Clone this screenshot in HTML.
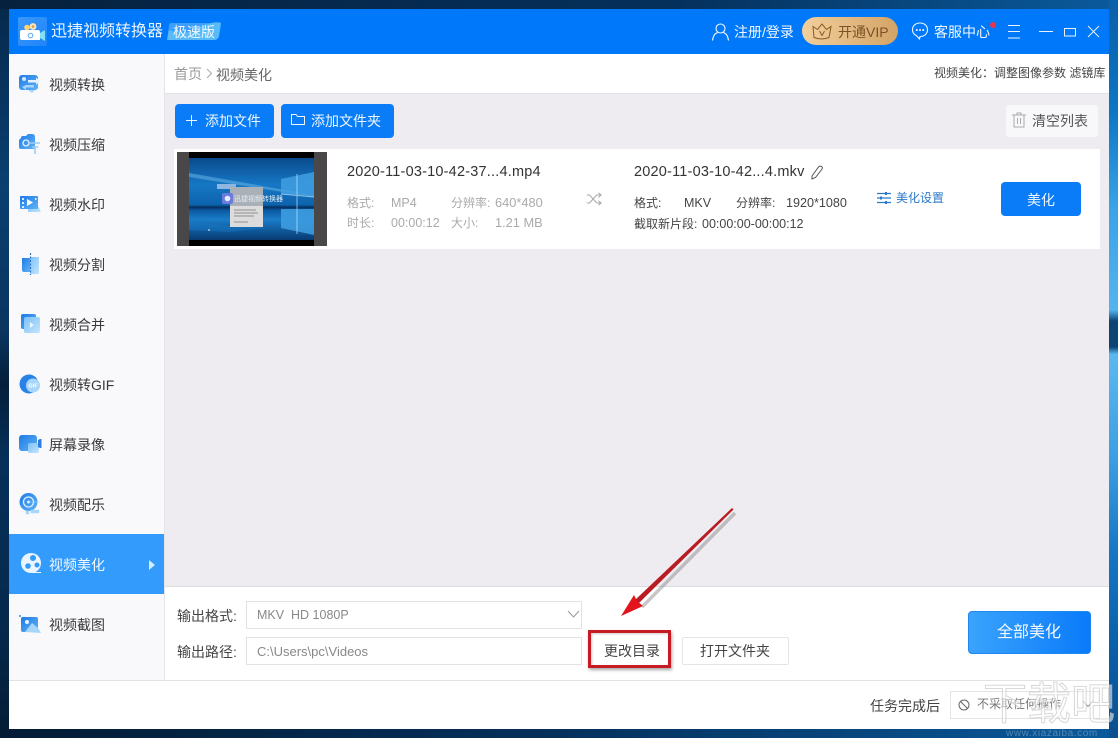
<!DOCTYPE html>
<html style="background:#04294f"><head><meta charset="utf-8">
<style>
*{box-sizing:border-box;margin:0;padding:0}
html,body{width:1118px;height:738px;overflow:hidden}
body{position:relative;font-family:"Liberation Sans","Noto Sans CJK SC",sans-serif;font-size:13px;color:#444;background:#04294f;filter:blur(.3px)}
.a{position:absolute;white-space:nowrap}
.t{position:absolute;white-space:nowrap;line-height:18px}
.nav{position:absolute;left:49px;font-size:14px;color:#3a3a3a;line-height:20px;white-space:nowrap}
.ic{position:absolute}
</style></head><body>
<svg style="position:absolute;width:0;height:0"><defs>
<linearGradient id="b" x1="0" y1="0" x2="1" y2="1"><stop offset="0" stop-color="#1f7be6"/><stop offset="1" stop-color="#5fb2f4"/></linearGradient>
<linearGradient id="l" x1="0" y1="0" x2="1" y2="1"><stop offset="0" stop-color="#7cc2f8"/><stop offset="1" stop-color="#c4e4fc"/></linearGradient>
<linearGradient id="g" x1="0" y1="0" x2="0" y2="1"><stop offset="0" stop-color="#0a4a8c"/><stop offset=".32" stop-color="#1677c4"/><stop offset=".57" stop-color="#0d63ad"/><stop offset=".6" stop-color="#063060"/><stop offset=".64" stop-color="#0b5ba4"/><stop offset=".75" stop-color="#1a7cc8"/><stop offset="1" stop-color="#063a72"/></linearGradient>
</defs></svg>
<!-- desktop -->
<div class="a" style="left:0;top:0;width:9px;height:738px;background:linear-gradient(180deg,#06294c 0,#0a3f70 25%,#0a3560 45%,#041f3a 52%,#06305a 62%,#06294c 85%,#041c34 100%)"></div>
<div class="a" style="left:0;top:0;width:1118px;height:9px;background:linear-gradient(90deg,#06213e,#05305c 60%,#0a5a9c 100%)"></div>
<div class="a" style="left:0;top:729px;width:1118px;height:9px;background:linear-gradient(90deg,#041c34,#05305c 50%,#0a5a9c 100%)"></div>
<div class="a" style="left:1109px;top:0;width:9px;height:738px;background:linear-gradient(180deg,#0a5fa8 0,#0c76c4 15%,#3aa2e6 28%,#55b4ee 42%,#0a4476 43.5%,#0a4476 47%,#5bb8f0 48%,#3d9fe2 62%,#1576c4 75%,#0a5fa8 88%,#0a4f8e 100%)"></div>

<!-- window -->
<div class="a" style="left:9px;top:9px;width:1100px;height:720px;background:#fff"></div>
<!-- title bar -->
<div class="a" style="left:9px;top:9px;width:1100px;height:45px;background:#0078fa"></div>
<div class="a" style="left:18px;top:17px;width:29px;height:29px;background:linear-gradient(135deg,#3a98fb,#1f84fa);border-radius:2px"></div>
<svg class="ic" style="left:18px;top:17px" width="29" height="29" viewBox="0 0 29 29">
<path d="M2 15q0-2 2-2h16q2 0 2 2v8H4q-2 0-2-2z" fill="#fff"/><circle cx="9" cy="10.500" r="2.800" fill="#ffd27a"/><circle cx="15" cy="9.500" r="3.400" fill="#ffe4b0"/><circle cx="15" cy="9.500" r="1.300" fill="#c99a55"/><path d="M22 16l5-3v11l-5-3z" fill="#7fe3f5"/><circle cx="12.500" cy="18.500" r="2.300" fill="none" stroke="#5aa6e8" stroke-width="1"/>
</svg>
<div class="t" style="left:51px;top:21px;font-size:16px;line-height:22px;color:#e9f3ff">迅捷视频转换器</div>
<svg class="ic" style="left:167px;top:22px" width="54" height="19" viewBox="0 0 54 19"><path d="M4 1h50l-2 13q-1 4-5 4H0L2 4q0-3 2-3z" fill="#3d9ffc"/><path d="M0 18L2 8q14 6 30-2t22-5l-2 13q-1 4-5 4z" fill="#62c4f5" opacity=".75"/></svg>
<div class="t" style="left:173px;top:23px;font-size:14px;color:#f1f8ff">极速版</div>

<svg class="ic" style="left:711px;top:22px" width="19" height="19" viewBox="0 0 19 19" fill="none" stroke="#f0f7ff" stroke-width="1.100"><circle cx="9.500" cy="6.500" r="4.500"/><path d="M1.500 18.500q1-7 5-7.800M17.500 18.500q-1-7-5-7.800"/></svg>
<div class="t" style="left:734px;top:23px;font-size:14px;color:#f0f7ff">注册/登录</div>
<div class="a" style="left:802px;top:17px;width:96px;height:28px;border-radius:14px;background:linear-gradient(90deg,#f2cf9d,#d3a366)"></div>
<svg class="ic" style="left:812px;top:23px" width="20" height="17" viewBox="0 0 20 17" fill="none" stroke="#8a5a22" stroke-width="1"><path d="M1 3.500l4.500 3L10 1l4.500 5.500 4.500-3-2 11q-7.500 3-15 0z"/><path d="M7.500 8l2.500 4.500L12.500 8"/></svg>
<div class="t" style="left:838px;top:23px;font-size:14px;color:#7a5226">开通VIP</div>
<svg class="ic" style="left:911px;top:22px" width="18" height="18" viewBox="0 0 18 18" fill="none" stroke="#eaf4ff" stroke-width="1.100"><path d="M9 1c4.500 0 7.500 2.900 7.500 6.800S13.500 14.500 9 14.500l-.5 2.500-3-3.300C3 12.600 1.500 10.500 1.500 7.800 1.500 3.900 4.500 1 9 1z"/><circle cx="5.800" cy="8" r=".5" fill="#fff"/><circle cx="9" cy="8" r=".5" fill="#fff"/><circle cx="12.200" cy="8" r=".5" fill="#fff"/></svg>
<div class="t" style="left:934px;top:23px;font-size:14px;color:#f0f7ff">客服中心</div>
<div class="a" style="left:990px;top:22px;width:6px;height:6px;border-radius:50%;background:#e8354a"></div>
<svg class="ic" style="left:1007px;top:24px" width="100" height="16" viewBox="0 0 100 16" fill="none" stroke="#e8f3ff" stroke-width="1"><path d="M1 1.500h12M1 7.500h12M1 14h12"/><path d="M32 7.500h14"/><rect x="57.500" y="4.500" width="11" height="7.500"/><path d="M81 2l11 11M92 2L81 13"/></svg>

<!-- sidebar -->
<div class="a" style="left:9px;top:54px;width:155px;height:626px;background:#f9f8fb"></div>
<div class="a" style="left:164px;top:54px;width:1px;height:626px;background:#e4e3e7"></div>
<div class="a" style="left:9px;top:534px;width:155px;height:60px;background:#339bfb"></div>
<svg class="ic" style="left:18px;top:73px" width="24" height="22" viewBox="0 0 24 22"><rect x="1" y="2" width="19" height="15" rx="3" fill="url(#b)"/><circle cx="6" cy="6" r="2" fill="#cfe6fb"/><path d="M22 8l-4-3.500V7H10v2.500h8V12z" fill="#e6f3ff"/><path d="M8 12h8v2.500H8V17l-4-3z" fill="#a8d6fa"/><path d="M10 17h7l-3 3z" fill="#8cc8f7" opacity=".7"/></svg>
<svg class="ic" style="left:18px;top:133px" width="24" height="22" viewBox="0 0 24 22"><path d="M3 5q0-2 2-2h3l2-2h4q3 0 3 3v12H3q-2 0-2-2V7z" fill="url(#b)"/><circle cx="8" cy="10" r="3" fill="none" stroke="#e4f2ff" stroke-width="1.300"/><path d="M12 10h10M14 14h6M17 15v6" stroke="#9bcef7" stroke-width="1.600"/></svg>
<svg class="ic" style="left:19px;top:194px" width="22" height="20" viewBox="0 0 22 20"><path d="M9 12h10l3 6H9z" fill="url(#l)"/><rect x="1" y="2" width="18" height="13" rx="1" fill="url(#b)"/><path d="M8 5l6 3.500-6 3.500z" fill="#fff"/><path d="M3 4h2v2H3zM3 8h2v2H3zM3 12h2v2H3zM16 4h1.500v2H16z" fill="#d9ecfd"/></svg>
<svg class="ic" style="left:21px;top:252px" width="20" height="24" viewBox="0 0 20 24"><path d="M1 6h8v14H3q-2 0-2-2z" fill="url(#b)"/><path d="M9 5h9v16q0 1-1 1H9z" fill="url(#l)"/><path d="M9.500 1v22" stroke="#2f72c8" stroke-dasharray="2 1.500" stroke-width="1.200"/></svg>
<svg class="ic" style="left:20px;top:313px" width="21" height="21" viewBox="0 0 21 21"><rect x="1" y="1" width="15" height="15" rx="2" fill="url(#b)"/><rect x="4" y="4" width="16" height="16" rx="2" fill="url(#l)"/><path d="M10 9l4 3-4 3z" fill="#e9f5ff"/></svg>
<svg class="ic" style="left:19px;top:374px" width="22" height="20" viewBox="0 0 22 20"><circle cx="10" cy="10" r="9.500" fill="#2a82e6"/><circle cx="14" cy="11.500" r="7" fill="#a8d6fa"/><text x="14" y="13.500" font-size="5.500" font-weight="bold" fill="#fff" text-anchor="middle" font-family="Liberation Sans">GIF</text></svg>
<svg class="ic" style="left:18px;top:434px" width="25" height="20" viewBox="0 0 25 20"><rect x="1" y="1" width="18" height="16" rx="3" fill="url(#b)"/><rect x="10" y="9" width="11" height="10" rx="2" fill="url(#l)"/><path d="M20 6l2-1h1.500v9H22l-2-1z" fill="#2a7fe0"/></svg>
<svg class="ic" style="left:19px;top:492px" width="21" height="23" viewBox="0 0 21 23"><circle cx="9.500" cy="10" r="9" fill="url(#b)"/><circle cx="9.500" cy="10" r="5" fill="none" stroke="#dcefff" stroke-width="1.300"/><circle cx="9.500" cy="10" r="1.500" fill="#dcefff"/><path d="M10 10h11M12 18h8v3h-8zM7 19h3v3H7z" fill="#a8d6fa" stroke="#a8d6fa" stroke-width=".5"/></svg>
<svg class="ic" style="left:20px;top:551px" width="22" height="24" viewBox="0 0 22 24"><circle cx="11" cy="12" r="10" fill="#eaf5ff"/><circle cx="13" cy="7" r="3" fill="#339bfb"/><circle cx="8" cy="15" r="2.800" fill="#339bfb"/><circle cx="17" cy="14" r="2.500" fill="#339bfb"/><path d="M12 21.500h9" stroke="#eaf5ff" stroke-width="1"/></svg>
<svg class="ic" style="left:18px;top:614px" width="24" height="21" viewBox="0 0 24 21"><path d="M1 1h2v2H1z" fill="#5da9ef"/><rect x="3" y="3" width="17" height="15" rx="2" fill="url(#b)"/><circle cx="9" cy="8" r="2" fill="#e3f2ff"/><path d="M7 18l7-9 6 5 3 5z" fill="#a8d6fa"/></svg>
<div class="nav" style="top:75px">视频转换</div>
<div class="nav" style="top:135px">视频压缩</div>
<div class="nav" style="top:195px">视频水印</div>
<div class="nav" style="top:255px">视频分割</div>
<div class="nav" style="top:315px">视频合并</div>
<div class="nav" style="top:375px">视频转GIF</div>
<div class="nav" style="top:435px">屏幕录像</div>
<div class="nav" style="top:495px">视频配乐</div>
<div class="nav" style="top:555px;color:#f2f9ff">视频美化</div>
<div class="nav" style="top:615px">视频截图</div>
<svg class="ic" style="left:148px;top:560px" width="7" height="10" viewBox="0 0 7 10"><path d="M1 0l6 5-6 5z" fill="#d5ebff"/></svg>

<!-- header -->
<div class="a" style="left:165px;top:93px;width:944px;height:493px;background:#eeecf1"></div>
<div class="a" style="left:165px;top:93px;width:944px;height:1px;background:#e0dfe3"></div>
<div class="t" style="left:174px;top:65px;font-size:14px;color:#9a9a9a">首页</div>
<svg class="ic" style="left:206px;top:68px" width="7" height="11" viewBox="0 0 7 11" fill="none" stroke="#aaa"><path d="M1 1l4.500 4.500L1 10"/></svg>
<div class="t" style="left:216px;top:66px;font-size:14px;color:#666">视频美化</div>
<div class="t" style="left:934px;top:64px;font-size:12px;color:#444">视频美化：调整图像参数 滤镜库</div>

<!-- toolbar -->
<div class="a" style="left:175px;top:104px;width:99px;height:34px;background:#0a7cf8;border-radius:4px"></div>
<svg class="ic" style="left:186px;top:115px" width="11" height="11" viewBox="0 0 11 11" stroke="#f0f8ff"><path d="M5.500 0v11M0 5.500h11"/></svg>
<div class="t" style="left:205px;top:112px;font-size:14px;color:#eef7ff">添加文件</div>
<div class="a" style="left:281px;top:104px;width:113px;height:34px;background:#0a7cf8;border-radius:4px"></div>
<svg class="ic" style="left:291px;top:113px" width="14" height="13" viewBox="0 0 14 13" fill="none" stroke="#f0f8ff"><path d="M.5 1.500h4.500l1.500 2h7v8H.5z"/></svg>
<div class="t" style="left:311px;top:112px;font-size:14px;color:#eef7ff">添加文件夹</div>
<div class="a" style="left:1006px;top:105px;width:92px;height:32px;background:#f8f7fa;border-radius:3px"></div>
<svg class="ic" style="left:1012px;top:112px" width="15" height="16" viewBox="0 0 15 16" fill="none" stroke="#aaa"><path d="M0 3h14M5 3V1h4v2M2 3v12h10V3M5.500 6v6M8.500 6v6"/></svg>
<div class="t" style="left:1032px;top:112px;font-size:14px;color:#555">清空列表</div>

<!-- file row -->
<div class="a" style="left:174px;top:149px;width:926px;height:100px;background:#fff"></div>
<div class="a" style="left:177px;top:152px;width:150px;height:94px;background:#4a4748"></div>
<svg class="ic" style="left:189px;top:152px" width="125" height="94" viewBox="0 0 125 94">
<rect width="125" height="94" fill="#000"/><rect y="6" width="125" height="82" fill="url(#g)"/>
<path d="M0 21l125 22v2L0 25z" fill="#6bb8ea" opacity=".5"/>
<path d="M0 70l40 4 40 2-40 4L0 78z" fill="#1a7cc8" opacity=".4"/>
<path d="M92 27l33-7v24l-33-2zM92 57h33v26l-33-7z" fill="#3f9fe2" opacity=".85"/>
<path d="M108 22v60M92 42l33 3" stroke="#bfe4fa" stroke-width="1" opacity=".7"/>
<rect x="28" y="32" width="19" height="5" fill="#8fb6e0"/>
<rect x="41" y="35" width="33" height="40" fill="#dcdcdc"/><rect x="41" y="35" width="33" height="19" fill="#a9b0b8"/>
<path d="M45 58h22M45 61h24M45 64h20M45 70h14" stroke="#777" stroke-width=".7"/>
<rect x="33" y="41" width="11" height="11" rx="2" fill="#6a7be0"/><circle cx="38.500" cy="46.500" r="2.800" fill="#e9ecff"/>
<text x="45" y="49" font-size="7" fill="#e6eef6" font-family="Noto Sans CJK SC">迅捷视频转换器</text>
<circle cx="20" cy="78" r=".8" fill="#fff"/>
</svg>
<div class="t" style="left:347px;top:163px;font-size:14.500px;letter-spacing:.2px;color:#333">2020-11-03-10-42-37...4.mp4</div>
<div class="t" style="left:347px;top:194px;font-size:12px;color:#aaa">格式:</div>
<div class="t" style="left:391px;top:194px;font-size:12.500px;color:#aaa">MP4</div>
<div class="t" style="left:451px;top:194px;font-size:12px;color:#aaa">分辨率:</div>
<div class="t" style="left:495px;top:194px;font-size:12.800px;color:#aaa">640*480</div>
<div class="t" style="left:347px;top:214px;font-size:12px;color:#aaa">时长:</div>
<div class="t" style="left:391px;top:214px;font-size:12.500px;color:#aaa">00:00:12</div>
<div class="t" style="left:451px;top:214px;font-size:12px;color:#aaa">大小:</div>
<div class="t" style="left:495px;top:214px;font-size:12.800px;color:#aaa">1.21 MB</div>
<svg class="ic" style="left:586px;top:192px" width="16" height="14" viewBox="0 0 18 15" fill="none" stroke="#aaa" stroke-width="1.200"><path d="M1 3h3l8 9h4M1 12h3l8-9h4M14 .5L17 3l-3 2.500M14 9.500l3 2.500-3 2.500"/></svg>
<div class="t" style="left:634px;top:163px;font-size:14.500px;letter-spacing:.2px;color:#333">2020-11-03-10-42...4.mkv</div>
<svg class="ic" style="left:810px;top:165px" width="13" height="15" viewBox="0 0 13 15" fill="none" stroke="#555"><path d="M2 11L8.500 2q1.500-1.500 3-.5t.5 2.500L5.500 12.500 2 14z"/></svg>
<div class="t" style="left:634px;top:194px;font-size:12px;color:#444">格式:</div>
<div class="t" style="left:684px;top:194px;font-size:12.500px;color:#444">MKV</div>
<div class="t" style="left:736px;top:194px;font-size:12px;color:#444">分辨率:</div>
<div class="t" style="left:786px;top:194px;font-size:12.600px;color:#444">1920*1080</div>
<div class="t" style="left:634px;top:215px;font-size:12px;color:#444">截取新片段:</div>
<div class="t" style="left:702px;top:215px;font-size:12.500px;color:#444">00:00:00-00:00:12</div>
<svg class="ic" style="left:877px;top:191px" width="14" height="14" viewBox="0 0 14 14" fill="none" stroke="#2a78c8" stroke-width="1.200"><path d="M0 2.500h14M0 7h14M0 11.500h14"/><path d="M9 1v3M4 5.500v3M9 10v3" stroke-width="2"/></svg>
<div class="t" style="left:896px;top:189px;font-size:12px;color:#2a78c8">美化设置</div>
<div class="a" style="left:1001px;top:182px;width:80px;height:34px;background:#0a7cf8;border-radius:4px"></div>
<div class="t" style="left:1027px;top:191px;font-size:14px;color:#f0f8ff">美化</div>

<!-- bottom panel -->
<div class="a" style="left:165px;top:586px;width:944px;height:1px;background:#dddce0"></div>
<div class="a" style="left:9px;top:680px;width:1100px;height:1px;background:#e2e2e4"></div>
<div class="t" style="left:177px;top:607px;font-size:14px;color:#444">输出格式:</div>
<div class="a" style="left:246px;top:601px;width:336px;height:28px;border:1px solid #e2e2e4;background:#fff"></div>
<div class="t" style="left:257px;top:606px;font-size:12.500px;color:#888">MKV&nbsp; HD 1080P</div>
<svg class="ic" style="left:567px;top:610px" width="13" height="8" viewBox="0 0 13 8" fill="none" stroke="#999"><path d="M1 1l5.500 6L12 1"/></svg>
<div class="t" style="left:177px;top:643px;font-size:14px;color:#444">输出路径:</div>
<div class="a" style="left:246px;top:637px;width:336px;height:28px;border:1px solid #e2e2e4;background:#fff"></div>
<div class="t" style="left:257px;top:643px;font-size:13px;color:#888">C:\Users\pc\Videos</div>
<div class="t" style="left:604px;top:642px;font-size:14px;color:#444">更改目录</div>
<div class="a" style="left:588px;top:630px;width:83px;height:38px;border:3px solid #c81a22;box-shadow:1px 2px 3px rgba(0,0,0,.35),inset 1px 1px 2px rgba(0,0,0,.2)"></div>
<div class="a" style="left:682px;top:637px;width:107px;height:28px;border:1px solid #e4e4e6;border-radius:2px"></div>
<div class="t" style="left:700px;top:642px;font-size:14px;color:#444">打开文件夹</div>
<div class="a" style="left:968px;top:611px;width:123px;height:43px;border-radius:4px;background:linear-gradient(90deg,#3aa3fc,#0a7afa);border:1px solid #1f88ec"></div>
<div class="t" style="left:997px;top:624px;font-size:16px;color:#f2f9ff">全部美化</div>
<!-- arrow -->
<svg class="ic" style="left:610px;top:500px" width="135" height="125" viewBox="0 0 135 125">
<path d="M123 11L30 105" stroke="#777" stroke-width="3.500" opacity=".4" transform="translate(2 2)"/>
<path d="M123.500 9.500L122 8 25 100l4 3z" fill="#b81c22"/>
<path d="M11 116L24 95l3 6 6 5z" fill="#e2141c"/>
</svg>

<!-- footer -->
<div class="t" style="left:870px;top:697px;font-size:14px;color:#444">任务完成后</div>
<div class="a" style="left:950px;top:691px;width:150px;height:28px;border:1px solid #e4e4e6"></div>
<svg class="ic" style="left:958px;top:699px" width="12" height="12" viewBox="0 0 12 12" fill="none" stroke="#666"><circle cx="6" cy="6" r="5"/><path d="M2.500 2.500l7 7"/></svg>
<div class="t" style="left:977px;top:695px;font-size:12px;color:#777">不采取任何操作</div>
<svg class="ic" style="left:1082px;top:700px" width="12" height="8" viewBox="0 0 12 8" fill="none" stroke="#999"><path d="M1 1l5 5.500L11 1"/></svg>
<!-- watermark -->
<div class="t" style="left:983px;top:680px;font-size:44px;line-height:50px;color:rgba(255,255,255,.55);-webkit-text-stroke:1px rgba(190,190,190,.6)">下载吧</div>
<div class="t" style="left:1006px;top:729px;font-size:10px;line-height:9px;color:rgba(190,210,230,.4);letter-spacing:.6px">www.xiazaiba.com</div>
</body></html>
